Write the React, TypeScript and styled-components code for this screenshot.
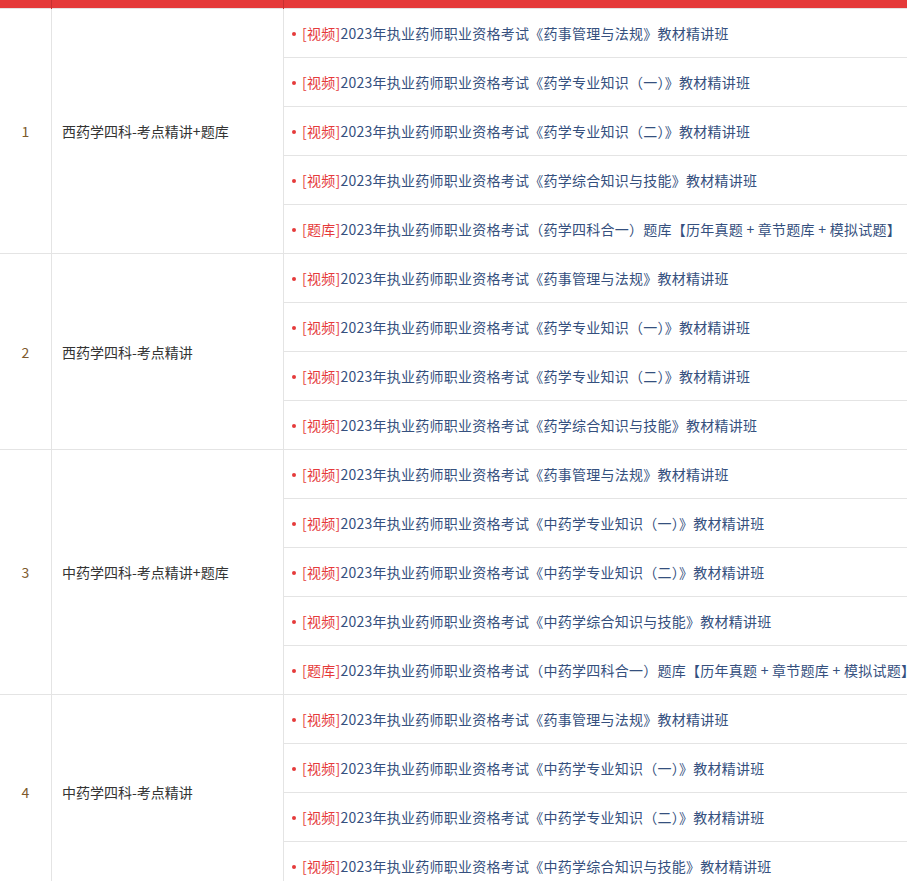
import React from "react";
import styled, { createGlobalStyle } from "styled-components";

const G = createGlobalStyle`
  body { margin: 0; background: #fff; font-family: "Microsoft YaHei", "Noto Sans CJK SC", sans-serif; }
`;

const Table = styled.table`
  width: 907px;
  border-collapse: collapse;
  table-layout: fixed;
  font-size: 14px;
`;
const HeadCell = styled.th<{ w?: number }>`
  height: 8px;
  padding: 0;
  background: #e53a3a;
  border-left: 1px solid #c73030;
  ${(p) => (p.w ? `width:${p.w}px;` : "")}
  &:first-child { border-left: none; }
`;
const NumCell = styled.td`
  border: 1px solid #e4e4e4;
  border-left: none;
  text-align: center;
  color: #7d5a2c;
`;
const NameCell = styled.td`
  border: 1px solid #e4e4e4;
  padding-left: 10px;
  color: #333;
`;
const ItemCell = styled.td`
  border-top: 1px solid #e4e4e4;
  height: 48px;
  padding: 0 0 0 8px;
  color: #35507e;
  white-space: nowrap;
  overflow: hidden;
  letter-spacing: 0.25px;
`;
const Dot = styled.span`
  display: inline-block;
  width: 4px;
  height: 4px;
  border-radius: 50%;
  background: #e53a3a;
  margin-right: 6px;
  vertical-align: middle;
  position: relative;
  top: -1px;
`;
const Tag = styled.span`
  color: #e53a3a;
`;

type Group = { name: string; items: [string, string][] };
const xi = (c: string): [string, string][] => [
  ["视频", "2023年执业药师职业资格考试《药事管理与法规》教材精讲班"],
  ["视频", `2023年执业药师职业资格考试《${c}专业知识（一）》教材精讲班`],
  ["视频", `2023年执业药师职业资格考试《${c}专业知识（二）》教材精讲班`],
  ["视频", `2023年执业药师职业资格考试《${c}综合知识与技能》教材精讲班`],
];
const tk = (c: string): [string, string] => [
  "题库",
  `2023年执业药师职业资格考试（${c}四科合一）题库【历年真题 + 章节题库 + 模拟试题】`,
];
const groups: Group[] = [
  { name: "西药学四科-考点精讲+题库", items: [...xi("药学"), tk("药学")] },
  { name: "西药学四科-考点精讲", items: xi("药学") },
  { name: "中药学四科-考点精讲+题库", items: [...xi("中药学"), tk("中药学")] },
  { name: "中药学四科-考点精讲", items: xi("中药学") },
];

export default function App() {
  return (
    <>
      <G />
      <Table>
        <thead>
          <tr>
            <HeadCell w={51} />
            <HeadCell w={231} />
            <HeadCell />
          </tr>
        </thead>
        <tbody>
          {groups.map((g, gi) =>
            g.items.map((it, i) => (
              <tr key={`${gi}-${i}`}>
                {i === 0 && (
                  <>
                    <NumCell rowSpan={g.items.length}>{gi + 1}</NumCell>
                    <NameCell rowSpan={g.items.length}>{g.name}</NameCell>
                  </>
                )}
                <ItemCell>
                  <Dot />
                  <Tag>[{it[0]}]</Tag>
                  {it[1]}
                </ItemCell>
              </tr>
            ))
          )}
        </tbody>
      </Table>
    </>
  );
}
